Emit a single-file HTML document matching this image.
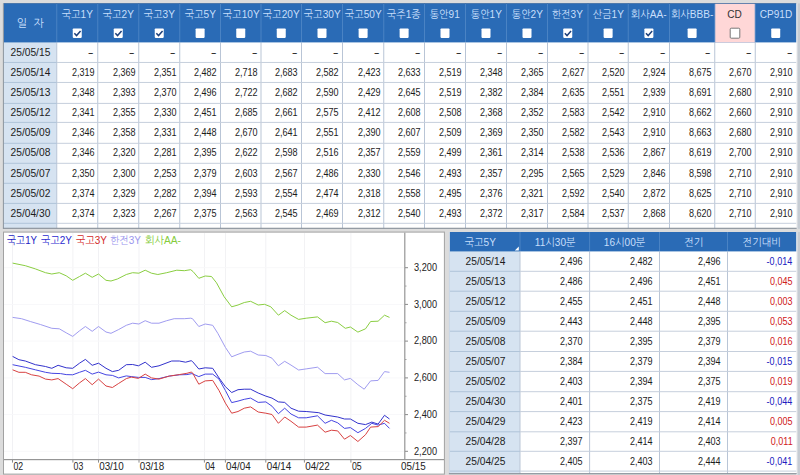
<!DOCTYPE html>
<html lang="ko"><head><meta charset="utf-8"><title>채권 수익률</title>
<style>
html,body{margin:0;padding:0}
body{width:800px;height:475px;overflow:hidden;background:#dcdcdc;position:relative;font-family:"Liberation Sans","NanumGothic",sans-serif;font-size:11px;color:#1c1c1c}
.a{position:absolute;box-sizing:border-box}
.hd{color:#c8dffb;text-align:center;white-space:nowrap}
.hd .t{position:absolute;left:-20px;right:-20px;top:4.3px;text-align:center;font-size:10.5px;line-height:12px}
.hd .t b{font-weight:normal;display:inline-block;transform:scaleX(.96)}
.c{text-align:right;white-space:nowrap;line-height:20px;height:20px}
.c b{font-weight:normal;display:inline-block;transform:scaleX(.82);transform-origin:100% 50%;font-size:11px}
.d{text-align:center;white-space:nowrap;line-height:20px;height:20px}
.d b{font-weight:normal;display:inline-block;transform:scaleX(.93);font-size:11px}
.dash b{transform:scaleX(1.6)}
.red b{color:#d02020}.blu b{color:#2020c0}
</style></head><body>
<svg class="a" style="left:0;top:0" width="800" height="475" viewBox="0 0 800 475" font-family="'Liberation Sans','NanumGothic',sans-serif">
<rect x="796.20" y="3.40" width="1.30" height="225.40" fill="#f4f6f8"/>
<rect x="797.50" y="3.40" width="2.50" height="225.40" fill="#c6ccd3"/>
<rect x="3.70" y="3.40" width="792.50" height="224.90" fill="#ffffff"/>
<rect x="3.70" y="3.40" width="53.05" height="224.90" fill="#d6e3f1"/>
<rect x="3.70" y="3.40" width="792.50" height="39.00" fill="#2a6bb6"/>
<rect x="714.75" y="3.40" width="40.50" height="39.00" fill="#ffd7d7"/>
<rect x="56.25" y="3.40" width="1.00" height="39.00" fill="#4a83c4"/>
<rect x="97.25" y="3.40" width="1.00" height="39.00" fill="#4a83c4"/>
<rect x="138.25" y="3.40" width="1.00" height="39.00" fill="#4a83c4"/>
<rect x="179.25" y="3.40" width="1.00" height="39.00" fill="#4a83c4"/>
<rect x="220.00" y="3.40" width="1.00" height="39.00" fill="#4a83c4"/>
<rect x="260.50" y="3.40" width="1.00" height="39.00" fill="#4a83c4"/>
<rect x="301.00" y="3.40" width="1.00" height="39.00" fill="#4a83c4"/>
<rect x="342.00" y="3.40" width="1.00" height="39.00" fill="#4a83c4"/>
<rect x="383.25" y="3.40" width="1.00" height="39.00" fill="#4a83c4"/>
<rect x="424.00" y="3.40" width="1.00" height="39.00" fill="#4a83c4"/>
<rect x="465.00" y="3.40" width="1.00" height="39.00" fill="#4a83c4"/>
<rect x="506.00" y="3.40" width="1.00" height="39.00" fill="#4a83c4"/>
<rect x="547.00" y="3.40" width="1.00" height="39.00" fill="#4a83c4"/>
<rect x="587.50" y="3.40" width="1.00" height="39.00" fill="#4a83c4"/>
<rect x="627.75" y="3.40" width="1.00" height="39.00" fill="#4a83c4"/>
<rect x="669.00" y="3.40" width="1.00" height="39.00" fill="#4a83c4"/>
<rect x="714.25" y="3.40" width="1.00" height="39.00" fill="#4a83c4"/>
<rect x="754.75" y="3.40" width="1.00" height="39.00" fill="#4a83c4"/>
<rect x="56.25" y="42.40" width="1.00" height="185.90" fill="#b9c5d6"/>
<rect x="97.25" y="42.40" width="1.00" height="185.90" fill="#b9c5d6"/>
<rect x="138.25" y="42.40" width="1.00" height="185.90" fill="#b9c5d6"/>
<rect x="179.25" y="42.40" width="1.00" height="185.90" fill="#b9c5d6"/>
<rect x="220.00" y="42.40" width="1.00" height="185.90" fill="#b9c5d6"/>
<rect x="260.50" y="42.40" width="1.00" height="185.90" fill="#b9c5d6"/>
<rect x="301.00" y="42.40" width="1.00" height="185.90" fill="#b9c5d6"/>
<rect x="342.00" y="42.40" width="1.00" height="185.90" fill="#b9c5d6"/>
<rect x="383.25" y="42.40" width="1.00" height="185.90" fill="#b9c5d6"/>
<rect x="424.00" y="42.40" width="1.00" height="185.90" fill="#b9c5d6"/>
<rect x="465.00" y="42.40" width="1.00" height="185.90" fill="#b9c5d6"/>
<rect x="506.00" y="42.40" width="1.00" height="185.90" fill="#b9c5d6"/>
<rect x="547.00" y="42.40" width="1.00" height="185.90" fill="#b9c5d6"/>
<rect x="587.50" y="42.40" width="1.00" height="185.90" fill="#b9c5d6"/>
<rect x="627.75" y="42.40" width="1.00" height="185.90" fill="#b9c5d6"/>
<rect x="669.00" y="42.40" width="1.00" height="185.90" fill="#b9c5d6"/>
<rect x="714.25" y="42.40" width="1.00" height="185.90" fill="#b9c5d6"/>
<rect x="754.75" y="42.40" width="1.00" height="185.90" fill="#b9c5d6"/>
<rect x="56.75" y="61.95" width="739.45" height="1.00" fill="#c6cfdc"/>
<rect x="3.70" y="61.95" width="53.05" height="1.00" fill="#b0c4d9"/>
<rect x="56.75" y="81.95" width="739.45" height="1.00" fill="#c6cfdc"/>
<rect x="3.70" y="81.95" width="53.05" height="1.00" fill="#b0c4d9"/>
<rect x="56.75" y="102.90" width="739.45" height="1.00" fill="#c6cfdc"/>
<rect x="3.70" y="102.90" width="53.05" height="1.00" fill="#b0c4d9"/>
<rect x="56.75" y="121.90" width="739.45" height="1.00" fill="#c6cfdc"/>
<rect x="3.70" y="121.90" width="53.05" height="1.00" fill="#b0c4d9"/>
<rect x="56.75" y="142.80" width="739.45" height="1.00" fill="#c6cfdc"/>
<rect x="3.70" y="142.80" width="53.05" height="1.00" fill="#b0c4d9"/>
<rect x="56.75" y="162.80" width="739.45" height="1.00" fill="#c6cfdc"/>
<rect x="3.70" y="162.80" width="53.05" height="1.00" fill="#b0c4d9"/>
<rect x="56.75" y="182.80" width="739.45" height="1.00" fill="#c6cfdc"/>
<rect x="3.70" y="182.80" width="53.05" height="1.00" fill="#b0c4d9"/>
<rect x="56.75" y="202.90" width="739.45" height="1.00" fill="#c6cfdc"/>
<rect x="3.70" y="202.90" width="53.05" height="1.00" fill="#b0c4d9"/>
<rect x="56.75" y="222.80" width="739.45" height="1.00" fill="#c6cfdc"/>
<rect x="3.70" y="222.80" width="53.05" height="1.00" fill="#b0c4d9"/>
<rect x="2.90" y="3.40" width="1.00" height="224.90" fill="#8b949e"/>
<rect x="3.70" y="3.25" width="792.50" height="0.70" fill="#3c679c"/>
<rect x="2.90" y="227.75" width="793.80" height="1.10" fill="#868e97"/>
<rect x="72.75" y="28.50" width="9.00" height="9.40" rx="0.8" fill="#fff"/>
<path d="M74.35 33.20 l2.2 2.4 l4 -4.6" fill="none" stroke="#1c3f7a" stroke-width="1.45"/>
<rect x="113.75" y="28.50" width="9.00" height="9.40" rx="0.8" fill="#fff"/>
<path d="M115.35 33.20 l2.2 2.4 l4 -4.6" fill="none" stroke="#1c3f7a" stroke-width="1.45"/>
<rect x="154.75" y="28.50" width="9.00" height="9.40" rx="0.8" fill="#fff"/>
<path d="M156.35 33.20 l2.2 2.4 l4 -4.6" fill="none" stroke="#1c3f7a" stroke-width="1.45"/>
<rect x="195.62" y="28.50" width="9.00" height="9.40" rx="0.8" fill="#fff"/>
<rect x="236.25" y="28.50" width="9.00" height="9.40" rx="0.8" fill="#fff"/>
<rect x="276.75" y="28.50" width="9.00" height="9.40" rx="0.8" fill="#fff"/>
<rect x="317.50" y="28.50" width="9.00" height="9.40" rx="0.8" fill="#fff"/>
<rect x="358.62" y="28.50" width="9.00" height="9.40" rx="0.8" fill="#fff"/>
<rect x="399.62" y="28.50" width="9.00" height="9.40" rx="0.8" fill="#fff"/>
<rect x="440.50" y="28.50" width="9.00" height="9.40" rx="0.8" fill="#fff"/>
<rect x="481.50" y="28.50" width="9.00" height="9.40" rx="0.8" fill="#fff"/>
<rect x="522.50" y="28.50" width="9.00" height="9.40" rx="0.8" fill="#fff"/>
<rect x="563.25" y="28.50" width="9.00" height="9.40" rx="0.8" fill="#fff"/>
<path d="M564.85 33.20 l2.2 2.4 l4 -4.6" fill="none" stroke="#1c3f7a" stroke-width="1.45"/>
<rect x="603.62" y="28.50" width="9.00" height="9.40" rx="0.8" fill="#fff"/>
<rect x="644.38" y="28.50" width="9.00" height="9.40" rx="0.8" fill="#fff"/>
<path d="M645.98 33.20 l2.2 2.4 l4 -4.6" fill="none" stroke="#1c3f7a" stroke-width="1.45"/>
<rect x="687.62" y="28.50" width="9.00" height="9.40" rx="0.8" fill="#fff"/>
<rect x="730.20" y="28.20" width="9.60" height="10.00" rx="1" fill="#fff" stroke="#777" stroke-width="1"/>
<rect x="771.23" y="28.50" width="9.00" height="9.40" rx="0.8" fill="#fff"/>
<rect x="3.50" y="232.10" width="440.90" height="242.00" fill="#ffffff" stroke="#a2a2a2" stroke-width="1"/>
<rect x="12.05" y="233.00" width="0.90" height="226.00" fill="#f0f0f3"/>
<rect x="72.45" y="233.00" width="0.90" height="226.00" fill="#f0f0f3"/>
<rect x="98.05" y="233.00" width="0.90" height="226.00" fill="#f0f0f3"/>
<rect x="138.55" y="233.00" width="0.90" height="226.00" fill="#f0f0f3"/>
<rect x="203.95" y="233.00" width="0.90" height="226.00" fill="#f0f0f3"/>
<rect x="224.95" y="233.00" width="0.90" height="226.00" fill="#f0f0f3"/>
<rect x="265.35" y="233.00" width="0.90" height="226.00" fill="#f0f0f3"/>
<rect x="303.95" y="233.00" width="0.90" height="226.00" fill="#f0f0f3"/>
<rect x="350.45" y="233.00" width="0.90" height="226.00" fill="#f0f0f3"/>
<rect x="4.00" y="267.25" width="400.00" height="0.90" fill="#f7f7f9"/>
<rect x="4.00" y="303.95" width="400.00" height="0.90" fill="#f7f7f9"/>
<rect x="4.00" y="340.65" width="400.00" height="0.90" fill="#f7f7f9"/>
<rect x="4.00" y="377.45" width="400.00" height="0.90" fill="#f7f7f9"/>
<rect x="4.00" y="414.15" width="400.00" height="0.90" fill="#f7f7f9"/>
<rect x="4.00" y="450.85" width="400.00" height="0.90" fill="#f7f7f9"/>
<rect x="404.20" y="232.60" width="1.20" height="227.00" fill="#969696"/>
<rect x="4.00" y="459.00" width="440.00" height="1.20" fill="#969696"/>
<rect x="405.00" y="267.20" width="3.00" height="1.00" fill="#8c8c8c"/>
<rect x="405.00" y="303.90" width="3.00" height="1.00" fill="#8c8c8c"/>
<rect x="405.00" y="340.60" width="3.00" height="1.00" fill="#8c8c8c"/>
<rect x="405.00" y="377.40" width="3.00" height="1.00" fill="#8c8c8c"/>
<rect x="405.00" y="414.10" width="3.00" height="1.00" fill="#8c8c8c"/>
<rect x="405.00" y="450.80" width="3.00" height="1.00" fill="#8c8c8c"/>
<rect x="405.00" y="285.55" width="1.50" height="1.00" fill="#a0a0a0"/>
<rect x="405.00" y="322.25" width="1.50" height="1.00" fill="#a0a0a0"/>
<rect x="405.00" y="359.00" width="1.50" height="1.00" fill="#a0a0a0"/>
<rect x="405.00" y="395.75" width="1.50" height="1.00" fill="#a0a0a0"/>
<rect x="405.00" y="432.45" width="1.50" height="1.00" fill="#a0a0a0"/>
<rect x="12.00" y="460.00" width="1.00" height="2.60" fill="#8c8c8c"/>
<rect x="72.40" y="460.00" width="1.00" height="2.60" fill="#8c8c8c"/>
<rect x="98.00" y="460.00" width="1.00" height="2.60" fill="#8c8c8c"/>
<rect x="138.50" y="460.00" width="1.00" height="2.60" fill="#8c8c8c"/>
<rect x="203.90" y="460.00" width="1.00" height="2.60" fill="#8c8c8c"/>
<rect x="224.90" y="460.00" width="1.00" height="2.60" fill="#8c8c8c"/>
<rect x="265.30" y="460.00" width="1.00" height="2.60" fill="#8c8c8c"/>
<rect x="303.90" y="460.00" width="1.00" height="2.60" fill="#8c8c8c"/>
<rect x="350.40" y="460.00" width="1.00" height="2.60" fill="#8c8c8c"/>
<polyline points="12.6,263.1 25.3,265.7 35.4,268.9 45.5,272.7 51.8,274.0 59.3,272.7 66.2,275.8 72.7,280.3 79.5,276.5 85.4,273.2 92.2,277.3 98.5,274.0 106.0,280.3 111.0,281.0 117.4,279.0 126.3,274.5 132.6,272.7 138.9,273.2 145.2,270.2 151.5,273.2 157.8,274.5 166.7,272.7 176.8,270.2 184.3,270.7 190.7,269.7 193.0,271.5 198.8,278.3 205.2,276.0 211.5,276.5 216.5,282.8 224.1,296.7 231.7,306.8 238.0,305.0 244.3,302.5 250.6,301.3 258.2,305.0 264.5,304.3 270.8,306.8 278.4,315.2 284.7,310.6 291.0,315.2 298.6,319.4 306.2,318.2 317.5,316.9 325.1,322.7 331.4,321.2 337.7,322.5 345.3,328.3 350.4,327.0 357.9,332.1 365.5,328.8 370.6,321.5 378.1,321.2 384.5,315.2 389.5,317.4" fill="none" stroke="#8ace42" stroke-width="1"/>
<polyline points="12.6,317.4 21.5,318.7 30.3,321.5 40.4,324.5 51.8,328.3 59.3,328.8 66.2,332.8 72.7,336.4 79.5,330.8 85.4,326.5 92.2,331.3 98.5,326.5 106.0,332.0 111.0,333.3 118.7,329.5 126.3,325.3 132.6,323.2 138.9,324.0 145.2,320.7 151.5,323.2 159.0,323.2 166.7,320.7 174.2,318.7 184.3,318.7 190.7,318.2 192.5,318.7 198.8,326.5 205.2,324.0 212.7,325.3 217.8,333.3 225.4,347.4 231.7,356.8 238.0,354.3 244.3,352.0 250.6,351.2 258.2,355.0 265.8,355.5 272.0,358.2 278.4,365.8 284.7,361.3 291.0,365.1 298.6,370.0 306.2,368.9 317.5,367.2 325.1,373.6 337.7,373.6 344.5,379.9 350.4,378.4 357.9,384.7 364.2,389.2 370.6,380.9 378.1,380.4 384.5,371.6 389.5,372.3" fill="none" stroke="#a09cf0" stroke-width="1"/>
<polyline points="12.6,356.4 18.9,359.7 25.3,361.0 35.4,364.7 45.5,366.5 51.8,368.3 58.1,365.3 66.2,367.8 72.7,368.3 79.5,363.2 85.4,359.4 92.2,365.3 98.5,363.2 106.0,368.3 112.4,371.6 118.7,370.3 126.3,364.7 132.6,364.5 138.4,365.8 145.2,362.2 151.5,367.3 159.0,365.8 171.7,361.0 179.3,361.0 185.6,362.2 191.2,360.7 192.5,361.5 198.8,369.0 205.2,367.8 212.7,368.3 219.0,377.9 225.4,386.7 231.7,392.5 238.0,389.7 244.3,389.2 250.6,389.2 258.2,393.0 265.8,396.1 272.0,398.1 278.4,401.9 284.7,402.4 291.0,408.2 298.6,411.2 306.2,411.5 318.8,412.7 325.1,415.0 337.7,417.0 344.5,419.0 350.4,419.0 357.9,423.3 365.5,424.6 371.8,422.1 378.1,424.1 384.5,415.3 389.5,419.0" fill="none" stroke="#3232cc" stroke-width="1"/>
<polyline points="12.6,364.7 25.3,367.3 35.4,369.8 45.5,372.3 51.8,373.3 60.6,373.6 66.2,374.6 72.7,374.8 79.5,372.3 85.4,370.3 92.2,374.1 98.5,372.1 106.0,374.8 112.4,375.4 118.7,377.9 126.3,375.9 131.3,376.6 138.4,377.4 145.2,377.4 151.5,379.6 159.0,378.6 169.2,376.1 179.3,374.8 186.9,374.6 191.9,373.6 198.8,376.6 205.2,374.1 212.7,374.1 219.0,379.1 225.4,390.5 231.7,402.6 238.0,401.1 244.3,399.3 250.6,398.1 258.2,402.4 265.8,401.9 272.0,406.2 278.4,413.7 284.7,408.2 291.0,414.0 298.6,417.8 306.2,417.8 317.5,415.8 325.1,423.3 331.4,420.3 337.7,422.8 344.5,428.4 350.4,427.6 357.9,432.7 365.5,428.4 371.8,423.3 378.1,425.1 384.5,423.3 389.5,428.4" fill="none" stroke="#4545e2" stroke-width="1"/>
<polyline points="12.6,369.8 18.9,372.3 25.3,372.3 31.6,374.8 39.1,376.1 45.5,379.1 51.8,379.9 58.1,378.6 66.2,384.2 72.7,388.7 79.5,382.9 85.4,378.6 92.2,384.7 98.5,379.1 106.0,386.0 112.4,387.5 118.7,383.4 126.3,378.6 131.3,377.1 138.4,378.4 145.2,374.1 151.5,377.9 159.0,379.1 169.2,376.1 179.3,374.6 186.9,373.3 191.2,372.1 192.5,372.8 198.8,384.2 205.2,380.9 212.7,380.4 219.0,390.5 225.4,403.1 231.7,413.2 238.0,411.5 244.3,408.2 250.6,406.9 258.2,412.0 265.8,413.2 272.0,414.5 278.4,423.3 284.7,417.0 291.0,421.3 298.6,427.1 306.2,427.1 317.5,425.1 325.1,432.2 331.4,430.2 337.7,430.9 344.5,439.2 350.4,435.5 357.9,441.5 365.5,434.7 370.6,427.1 378.1,426.6 384.5,420.3 389.5,423.3" fill="none" stroke="#d84242" stroke-width="1"/>
<text x="414" y="271.0" font-size="11" fill="#222" textLength="23" lengthAdjust="spacingAndGlyphs">3,200</text>
<text x="414" y="307.7" font-size="11" fill="#222" textLength="23" lengthAdjust="spacingAndGlyphs">3,000</text>
<text x="414" y="344.4" font-size="11" fill="#222" textLength="23" lengthAdjust="spacingAndGlyphs">2,800</text>
<text x="414" y="381.2" font-size="11" fill="#222" textLength="23" lengthAdjust="spacingAndGlyphs">2,600</text>
<text x="414" y="417.9" font-size="11" fill="#222" textLength="23" lengthAdjust="spacingAndGlyphs">2,400</text>
<text x="414" y="454.6" font-size="11" fill="#222" textLength="23" lengthAdjust="spacingAndGlyphs">2,200</text>
<text x="13.4" y="470.4" font-size="11" fill="#222" textLength="9.7" lengthAdjust="spacingAndGlyphs">02</text>
<text x="73.6" y="470.4" font-size="11" fill="#222" textLength="9.7" lengthAdjust="spacingAndGlyphs">03</text>
<text x="99.2" y="470.4" font-size="11" fill="#222" textLength="24.6" lengthAdjust="spacingAndGlyphs">03/10</text>
<text x="139.7" y="470.4" font-size="11" fill="#222" textLength="24.6" lengthAdjust="spacingAndGlyphs">03/18</text>
<text x="205.2" y="470.4" font-size="11" fill="#222" textLength="9.7" lengthAdjust="spacingAndGlyphs">04</text>
<text x="226.1" y="470.4" font-size="11" fill="#222" textLength="24.6" lengthAdjust="spacingAndGlyphs">04/04</text>
<text x="266.7" y="470.4" font-size="11" fill="#222" textLength="24.6" lengthAdjust="spacingAndGlyphs">04/14</text>
<text x="305.2" y="470.4" font-size="11" fill="#222" textLength="24.6" lengthAdjust="spacingAndGlyphs">04/22</text>
<text x="352.0" y="470.4" font-size="11" fill="#222" textLength="9.7" lengthAdjust="spacingAndGlyphs">05</text>
<text x="401.0" y="470.4" font-size="11" fill="#222" textLength="24.6" lengthAdjust="spacingAndGlyphs">05/15</text>
<text x="7.0" y="244" font-size="10.5" fill="#2222c4" textLength="30" lengthAdjust="spacingAndGlyphs">국고1Y</text>
<text x="41.0" y="244" font-size="10.5" fill="#2a2ad0" textLength="31" lengthAdjust="spacingAndGlyphs">국고2Y</text>
<text x="76.0" y="244" font-size="10.5" fill="#d42a2a" textLength="31" lengthAdjust="spacingAndGlyphs">국고3Y</text>
<text x="110.0" y="244" font-size="10.5" fill="#9a96ee" textLength="31" lengthAdjust="spacingAndGlyphs">한전3Y</text>
<text x="145.0" y="244" font-size="10.5" fill="#86cc3c" textLength="36" lengthAdjust="spacingAndGlyphs">회사AA-</text>
<rect x="796.20" y="232.00" width="1.30" height="243.00" fill="#f4f6f8"/>
<rect x="797.50" y="232.00" width="2.50" height="243.00" fill="#c6ccd3"/>
<rect x="449.60" y="232.00" width="346.60" height="241.70" fill="#ffffff"/>
<rect x="449.60" y="232.00" width="70.40" height="241.70" fill="#d6e3f1"/>
<rect x="449.60" y="232.00" width="346.60" height="19.40" fill="#2a6bb6"/>
<rect x="519.50" y="232.00" width="1.00" height="19.40" fill="#4a83c4"/>
<rect x="519.50" y="251.40" width="1.00" height="222.30" fill="#b9c5d6"/>
<rect x="589.10" y="232.00" width="1.00" height="19.40" fill="#4a83c4"/>
<rect x="589.10" y="251.40" width="1.00" height="222.30" fill="#b9c5d6"/>
<rect x="659.00" y="232.00" width="1.00" height="19.40" fill="#4a83c4"/>
<rect x="659.00" y="251.40" width="1.00" height="222.30" fill="#b9c5d6"/>
<rect x="727.00" y="232.00" width="1.00" height="19.40" fill="#4a83c4"/>
<rect x="727.00" y="251.40" width="1.00" height="222.30" fill="#b9c5d6"/>
<rect x="520.00" y="270.80" width="276.20" height="1.00" fill="#c6cfdc"/>
<rect x="449.60" y="270.80" width="70.40" height="1.00" fill="#b0c4d9"/>
<rect x="520.00" y="290.70" width="276.20" height="1.00" fill="#c6cfdc"/>
<rect x="449.60" y="290.70" width="70.40" height="1.00" fill="#b0c4d9"/>
<rect x="520.00" y="310.80" width="276.20" height="1.00" fill="#c6cfdc"/>
<rect x="449.60" y="310.80" width="70.40" height="1.00" fill="#b0c4d9"/>
<rect x="520.00" y="330.70" width="276.20" height="1.00" fill="#c6cfdc"/>
<rect x="449.60" y="330.70" width="70.40" height="1.00" fill="#b0c4d9"/>
<rect x="520.00" y="351.00" width="276.20" height="1.00" fill="#c6cfdc"/>
<rect x="449.60" y="351.00" width="70.40" height="1.00" fill="#b0c4d9"/>
<rect x="520.00" y="370.90" width="276.20" height="1.00" fill="#c6cfdc"/>
<rect x="449.60" y="370.90" width="70.40" height="1.00" fill="#b0c4d9"/>
<rect x="520.00" y="391.20" width="276.20" height="1.00" fill="#c6cfdc"/>
<rect x="449.60" y="391.20" width="70.40" height="1.00" fill="#b0c4d9"/>
<rect x="520.00" y="411.10" width="276.20" height="1.00" fill="#c6cfdc"/>
<rect x="449.60" y="411.10" width="70.40" height="1.00" fill="#b0c4d9"/>
<rect x="520.00" y="431.30" width="276.20" height="1.00" fill="#c6cfdc"/>
<rect x="449.60" y="431.30" width="70.40" height="1.00" fill="#b0c4d9"/>
<rect x="520.00" y="450.80" width="276.20" height="1.00" fill="#c6cfdc"/>
<rect x="449.60" y="450.80" width="70.40" height="1.00" fill="#b0c4d9"/>
<rect x="520.00" y="470.60" width="276.20" height="1.00" fill="#c6cfdc"/>
<rect x="449.60" y="470.60" width="70.40" height="1.00" fill="#b0c4d9"/>
<rect x="448.90" y="232.00" width="1.00" height="241.70" fill="#c9d6e6"/>
<rect x="448.90" y="473.15" width="347.80" height="1.10" fill="#868e97"/>
<path d="M518.80 250.40 v-4 l-4 4 z" fill="#fff"/>
</svg>
<div class="a hd" style="left:3.70px;top:3.4px;width:53.05px;height:38px"><span class="t" style="top:14px;font-size:11px">일&nbsp;&nbsp;자</span></div>
<div class="a hd" style="left:56.75px;top:3.4px;width:41.00px;height:38px"><span class="t"><b>국고1Y</b></span></div>
<div class="a hd" style="left:97.75px;top:3.4px;width:41.00px;height:38px"><span class="t"><b>국고2Y</b></span></div>
<div class="a hd" style="left:138.75px;top:3.4px;width:41.00px;height:38px"><span class="t"><b>국고3Y</b></span></div>
<div class="a hd" style="left:179.75px;top:3.4px;width:40.75px;height:38px"><span class="t"><b>국고5Y</b></span></div>
<div class="a hd" style="left:220.50px;top:3.4px;width:40.50px;height:38px"><span class="t"><b>국고10Y</b></span></div>
<div class="a hd" style="left:261.00px;top:3.4px;width:40.50px;height:38px"><span class="t"><b>국고20Y</b></span></div>
<div class="a hd" style="left:301.50px;top:3.4px;width:41.00px;height:38px"><span class="t"><b>국고30Y</b></span></div>
<div class="a hd" style="left:342.50px;top:3.4px;width:41.25px;height:38px"><span class="t"><b>국고50Y</b></span></div>
<div class="a hd" style="left:383.75px;top:3.4px;width:40.75px;height:38px"><span class="t"><b>국주1종</b></span></div>
<div class="a hd" style="left:424.50px;top:3.4px;width:41.00px;height:38px"><span class="t"><b>통안91</b></span></div>
<div class="a hd" style="left:465.50px;top:3.4px;width:41.00px;height:38px"><span class="t"><b>통안1Y</b></span></div>
<div class="a hd" style="left:506.50px;top:3.4px;width:41.00px;height:38px"><span class="t"><b>통안2Y</b></span></div>
<div class="a hd" style="left:547.50px;top:3.4px;width:40.50px;height:38px"><span class="t"><b>한전3Y</b></span></div>
<div class="a hd" style="left:588.00px;top:3.4px;width:40.25px;height:38px"><span class="t"><b>산금1Y</b></span></div>
<div class="a hd" style="left:628.25px;top:3.4px;width:41.25px;height:38px"><span class="t"><b>회사AA-</b></span></div>
<div class="a hd" style="left:669.50px;top:3.4px;width:45.25px;height:38px"><span class="t"><b>회사BBB-</b></span></div>
<div class="a hd" style="left:714.75px;top:3.4px;width:40.50px;height:38px;color:#333"><span class="t"><b>CD</b></span></div>
<div class="a hd" style="left:755.25px;top:3.4px;width:40.95px;height:38px"><span class="t"><b>CP91D</b></span></div>
<div class="a d" style="left:3.70px;top:42px;width:53.05px;padding-left:1.00px"><b>25/05/15</b></div>
<div class="a c dash" style="left:56.75px;top:42px;width:41.00px;padding-right:3.60px"><b>-</b></div>
<div class="a c dash" style="left:97.75px;top:42px;width:41.00px;padding-right:3.60px"><b>-</b></div>
<div class="a c dash" style="left:138.75px;top:42px;width:41.00px;padding-right:3.60px"><b>-</b></div>
<div class="a c dash" style="left:179.75px;top:42px;width:40.75px;padding-right:3.60px"><b>-</b></div>
<div class="a c dash" style="left:220.50px;top:42px;width:40.50px;padding-right:3.60px"><b>-</b></div>
<div class="a c dash" style="left:261.00px;top:42px;width:40.50px;padding-right:3.60px"><b>-</b></div>
<div class="a c dash" style="left:301.50px;top:42px;width:41.00px;padding-right:3.60px"><b>-</b></div>
<div class="a c dash" style="left:342.50px;top:42px;width:41.25px;padding-right:3.60px"><b>-</b></div>
<div class="a c dash" style="left:383.75px;top:42px;width:40.75px;padding-right:3.60px"><b>-</b></div>
<div class="a c dash" style="left:424.50px;top:42px;width:41.00px;padding-right:3.60px"><b>-</b></div>
<div class="a c dash" style="left:465.50px;top:42px;width:41.00px;padding-right:3.60px"><b>-</b></div>
<div class="a c dash" style="left:506.50px;top:42px;width:41.00px;padding-right:3.60px"><b>-</b></div>
<div class="a c dash" style="left:547.50px;top:42px;width:40.50px;padding-right:3.60px"><b>-</b></div>
<div class="a c dash" style="left:588.00px;top:42px;width:40.25px;padding-right:3.60px"><b>-</b></div>
<div class="a c dash" style="left:628.25px;top:42px;width:41.25px;padding-right:3.60px"><b>-</b></div>
<div class="a c dash" style="left:669.50px;top:42px;width:45.25px;padding-right:3.60px"><b>-</b></div>
<div class="a c dash" style="left:714.75px;top:42px;width:40.50px;padding-right:3.60px"><b>-</b></div>
<div class="a c dash" style="left:755.25px;top:42px;width:40.95px;padding-right:3.60px"><b>-</b></div>
<div class="a d" style="left:3.70px;top:62px;width:53.05px;padding-left:1.00px"><b>25/05/14</b></div>
<div class="a c" style="left:56.75px;top:62px;width:41.00px;padding-right:3.50px"><b>2,319</b></div>
<div class="a c" style="left:97.75px;top:62px;width:41.00px;padding-right:3.50px"><b>2,369</b></div>
<div class="a c" style="left:138.75px;top:62px;width:41.00px;padding-right:3.50px"><b>2,351</b></div>
<div class="a c" style="left:179.75px;top:62px;width:40.75px;padding-right:3.50px"><b>2,482</b></div>
<div class="a c" style="left:220.50px;top:62px;width:40.50px;padding-right:3.50px"><b>2,718</b></div>
<div class="a c" style="left:261.00px;top:62px;width:40.50px;padding-right:3.50px"><b>2,683</b></div>
<div class="a c" style="left:301.50px;top:62px;width:41.00px;padding-right:3.50px"><b>2,582</b></div>
<div class="a c" style="left:342.50px;top:62px;width:41.25px;padding-right:3.50px"><b>2,423</b></div>
<div class="a c" style="left:383.75px;top:62px;width:40.75px;padding-right:3.50px"><b>2,633</b></div>
<div class="a c" style="left:424.50px;top:62px;width:41.00px;padding-right:3.50px"><b>2,519</b></div>
<div class="a c" style="left:465.50px;top:62px;width:41.00px;padding-right:3.50px"><b>2,348</b></div>
<div class="a c" style="left:506.50px;top:62px;width:41.00px;padding-right:3.50px"><b>2,365</b></div>
<div class="a c" style="left:547.50px;top:62px;width:40.50px;padding-right:3.50px"><b>2,627</b></div>
<div class="a c" style="left:588.00px;top:62px;width:40.25px;padding-right:3.50px"><b>2,520</b></div>
<div class="a c" style="left:628.25px;top:62px;width:41.25px;padding-right:3.50px"><b>2,924</b></div>
<div class="a c" style="left:669.50px;top:62px;width:45.25px;padding-right:3.50px"><b>8,675</b></div>
<div class="a c" style="left:714.75px;top:62px;width:40.50px;padding-right:3.50px"><b>2,670</b></div>
<div class="a c" style="left:755.25px;top:62px;width:40.95px;padding-right:3.50px"><b>2,910</b></div>
<div class="a d" style="left:3.70px;top:82px;width:53.05px;padding-left:1.00px"><b>25/05/13</b></div>
<div class="a c" style="left:56.75px;top:82px;width:41.00px;padding-right:3.50px"><b>2,348</b></div>
<div class="a c" style="left:97.75px;top:82px;width:41.00px;padding-right:3.50px"><b>2,393</b></div>
<div class="a c" style="left:138.75px;top:82px;width:41.00px;padding-right:3.50px"><b>2,370</b></div>
<div class="a c" style="left:179.75px;top:82px;width:40.75px;padding-right:3.50px"><b>2,496</b></div>
<div class="a c" style="left:220.50px;top:82px;width:40.50px;padding-right:3.50px"><b>2,722</b></div>
<div class="a c" style="left:261.00px;top:82px;width:40.50px;padding-right:3.50px"><b>2,682</b></div>
<div class="a c" style="left:301.50px;top:82px;width:41.00px;padding-right:3.50px"><b>2,590</b></div>
<div class="a c" style="left:342.50px;top:82px;width:41.25px;padding-right:3.50px"><b>2,429</b></div>
<div class="a c" style="left:383.75px;top:82px;width:40.75px;padding-right:3.50px"><b>2,645</b></div>
<div class="a c" style="left:424.50px;top:82px;width:41.00px;padding-right:3.50px"><b>2,519</b></div>
<div class="a c" style="left:465.50px;top:82px;width:41.00px;padding-right:3.50px"><b>2,382</b></div>
<div class="a c" style="left:506.50px;top:82px;width:41.00px;padding-right:3.50px"><b>2,384</b></div>
<div class="a c" style="left:547.50px;top:82px;width:40.50px;padding-right:3.50px"><b>2,635</b></div>
<div class="a c" style="left:588.00px;top:82px;width:40.25px;padding-right:3.50px"><b>2,551</b></div>
<div class="a c" style="left:628.25px;top:82px;width:41.25px;padding-right:3.50px"><b>2,939</b></div>
<div class="a c" style="left:669.50px;top:82px;width:45.25px;padding-right:3.50px"><b>8,691</b></div>
<div class="a c" style="left:714.75px;top:82px;width:40.50px;padding-right:3.50px"><b>2,680</b></div>
<div class="a c" style="left:755.25px;top:82px;width:40.95px;padding-right:3.50px"><b>2,910</b></div>
<div class="a d" style="left:3.70px;top:102px;width:53.05px;padding-left:1.00px"><b>25/05/12</b></div>
<div class="a c" style="left:56.75px;top:102px;width:41.00px;padding-right:3.50px"><b>2,341</b></div>
<div class="a c" style="left:97.75px;top:102px;width:41.00px;padding-right:3.50px"><b>2,355</b></div>
<div class="a c" style="left:138.75px;top:102px;width:41.00px;padding-right:3.50px"><b>2,330</b></div>
<div class="a c" style="left:179.75px;top:102px;width:40.75px;padding-right:3.50px"><b>2,451</b></div>
<div class="a c" style="left:220.50px;top:102px;width:40.50px;padding-right:3.50px"><b>2,685</b></div>
<div class="a c" style="left:261.00px;top:102px;width:40.50px;padding-right:3.50px"><b>2,661</b></div>
<div class="a c" style="left:301.50px;top:102px;width:41.00px;padding-right:3.50px"><b>2,575</b></div>
<div class="a c" style="left:342.50px;top:102px;width:41.25px;padding-right:3.50px"><b>2,412</b></div>
<div class="a c" style="left:383.75px;top:102px;width:40.75px;padding-right:3.50px"><b>2,608</b></div>
<div class="a c" style="left:424.50px;top:102px;width:41.00px;padding-right:3.50px"><b>2,508</b></div>
<div class="a c" style="left:465.50px;top:102px;width:41.00px;padding-right:3.50px"><b>2,368</b></div>
<div class="a c" style="left:506.50px;top:102px;width:41.00px;padding-right:3.50px"><b>2,352</b></div>
<div class="a c" style="left:547.50px;top:102px;width:40.50px;padding-right:3.50px"><b>2,583</b></div>
<div class="a c" style="left:588.00px;top:102px;width:40.25px;padding-right:3.50px"><b>2,542</b></div>
<div class="a c" style="left:628.25px;top:102px;width:41.25px;padding-right:3.50px"><b>2,910</b></div>
<div class="a c" style="left:669.50px;top:102px;width:45.25px;padding-right:3.50px"><b>8,662</b></div>
<div class="a c" style="left:714.75px;top:102px;width:40.50px;padding-right:3.50px"><b>2,660</b></div>
<div class="a c" style="left:755.25px;top:102px;width:40.95px;padding-right:3.50px"><b>2,910</b></div>
<div class="a d" style="left:3.70px;top:122px;width:53.05px;padding-left:1.00px"><b>25/05/09</b></div>
<div class="a c" style="left:56.75px;top:122px;width:41.00px;padding-right:3.50px"><b>2,346</b></div>
<div class="a c" style="left:97.75px;top:122px;width:41.00px;padding-right:3.50px"><b>2,358</b></div>
<div class="a c" style="left:138.75px;top:122px;width:41.00px;padding-right:3.50px"><b>2,331</b></div>
<div class="a c" style="left:179.75px;top:122px;width:40.75px;padding-right:3.50px"><b>2,448</b></div>
<div class="a c" style="left:220.50px;top:122px;width:40.50px;padding-right:3.50px"><b>2,670</b></div>
<div class="a c" style="left:261.00px;top:122px;width:40.50px;padding-right:3.50px"><b>2,641</b></div>
<div class="a c" style="left:301.50px;top:122px;width:41.00px;padding-right:3.50px"><b>2,551</b></div>
<div class="a c" style="left:342.50px;top:122px;width:41.25px;padding-right:3.50px"><b>2,390</b></div>
<div class="a c" style="left:383.75px;top:122px;width:40.75px;padding-right:3.50px"><b>2,607</b></div>
<div class="a c" style="left:424.50px;top:122px;width:41.00px;padding-right:3.50px"><b>2,509</b></div>
<div class="a c" style="left:465.50px;top:122px;width:41.00px;padding-right:3.50px"><b>2,369</b></div>
<div class="a c" style="left:506.50px;top:122px;width:41.00px;padding-right:3.50px"><b>2,350</b></div>
<div class="a c" style="left:547.50px;top:122px;width:40.50px;padding-right:3.50px"><b>2,582</b></div>
<div class="a c" style="left:588.00px;top:122px;width:40.25px;padding-right:3.50px"><b>2,543</b></div>
<div class="a c" style="left:628.25px;top:122px;width:41.25px;padding-right:3.50px"><b>2,910</b></div>
<div class="a c" style="left:669.50px;top:122px;width:45.25px;padding-right:3.50px"><b>8,663</b></div>
<div class="a c" style="left:714.75px;top:122px;width:40.50px;padding-right:3.50px"><b>2,680</b></div>
<div class="a c" style="left:755.25px;top:122px;width:40.95px;padding-right:3.50px"><b>2,910</b></div>
<div class="a d" style="left:3.70px;top:142px;width:53.05px;padding-left:1.00px"><b>25/05/08</b></div>
<div class="a c" style="left:56.75px;top:142px;width:41.00px;padding-right:3.50px"><b>2,346</b></div>
<div class="a c" style="left:97.75px;top:142px;width:41.00px;padding-right:3.50px"><b>2,320</b></div>
<div class="a c" style="left:138.75px;top:142px;width:41.00px;padding-right:3.50px"><b>2,281</b></div>
<div class="a c" style="left:179.75px;top:142px;width:40.75px;padding-right:3.50px"><b>2,395</b></div>
<div class="a c" style="left:220.50px;top:142px;width:40.50px;padding-right:3.50px"><b>2,622</b></div>
<div class="a c" style="left:261.00px;top:142px;width:40.50px;padding-right:3.50px"><b>2,598</b></div>
<div class="a c" style="left:301.50px;top:142px;width:41.00px;padding-right:3.50px"><b>2,516</b></div>
<div class="a c" style="left:342.50px;top:142px;width:41.25px;padding-right:3.50px"><b>2,357</b></div>
<div class="a c" style="left:383.75px;top:142px;width:40.75px;padding-right:3.50px"><b>2,559</b></div>
<div class="a c" style="left:424.50px;top:142px;width:41.00px;padding-right:3.50px"><b>2,499</b></div>
<div class="a c" style="left:465.50px;top:142px;width:41.00px;padding-right:3.50px"><b>2,361</b></div>
<div class="a c" style="left:506.50px;top:142px;width:41.00px;padding-right:3.50px"><b>2,314</b></div>
<div class="a c" style="left:547.50px;top:142px;width:40.50px;padding-right:3.50px"><b>2,538</b></div>
<div class="a c" style="left:588.00px;top:142px;width:40.25px;padding-right:3.50px"><b>2,536</b></div>
<div class="a c" style="left:628.25px;top:142px;width:41.25px;padding-right:3.50px"><b>2,867</b></div>
<div class="a c" style="left:669.50px;top:142px;width:45.25px;padding-right:3.50px"><b>8,619</b></div>
<div class="a c" style="left:714.75px;top:142px;width:40.50px;padding-right:3.50px"><b>2,700</b></div>
<div class="a c" style="left:755.25px;top:142px;width:40.95px;padding-right:3.50px"><b>2,910</b></div>
<div class="a d" style="left:3.70px;top:163px;width:53.05px;padding-left:1.00px"><b>25/05/07</b></div>
<div class="a c" style="left:56.75px;top:163px;width:41.00px;padding-right:3.50px"><b>2,350</b></div>
<div class="a c" style="left:97.75px;top:163px;width:41.00px;padding-right:3.50px"><b>2,300</b></div>
<div class="a c" style="left:138.75px;top:163px;width:41.00px;padding-right:3.50px"><b>2,253</b></div>
<div class="a c" style="left:179.75px;top:163px;width:40.75px;padding-right:3.50px"><b>2,379</b></div>
<div class="a c" style="left:220.50px;top:163px;width:40.50px;padding-right:3.50px"><b>2,603</b></div>
<div class="a c" style="left:261.00px;top:163px;width:40.50px;padding-right:3.50px"><b>2,567</b></div>
<div class="a c" style="left:301.50px;top:163px;width:41.00px;padding-right:3.50px"><b>2,486</b></div>
<div class="a c" style="left:342.50px;top:163px;width:41.25px;padding-right:3.50px"><b>2,330</b></div>
<div class="a c" style="left:383.75px;top:163px;width:40.75px;padding-right:3.50px"><b>2,546</b></div>
<div class="a c" style="left:424.50px;top:163px;width:41.00px;padding-right:3.50px"><b>2,493</b></div>
<div class="a c" style="left:465.50px;top:163px;width:41.00px;padding-right:3.50px"><b>2,357</b></div>
<div class="a c" style="left:506.50px;top:163px;width:41.00px;padding-right:3.50px"><b>2,295</b></div>
<div class="a c" style="left:547.50px;top:163px;width:40.50px;padding-right:3.50px"><b>2,565</b></div>
<div class="a c" style="left:588.00px;top:163px;width:40.25px;padding-right:3.50px"><b>2,529</b></div>
<div class="a c" style="left:628.25px;top:163px;width:41.25px;padding-right:3.50px"><b>2,846</b></div>
<div class="a c" style="left:669.50px;top:163px;width:45.25px;padding-right:3.50px"><b>8,598</b></div>
<div class="a c" style="left:714.75px;top:163px;width:40.50px;padding-right:3.50px"><b>2,710</b></div>
<div class="a c" style="left:755.25px;top:163px;width:40.95px;padding-right:3.50px"><b>2,910</b></div>
<div class="a d" style="left:3.70px;top:183px;width:53.05px;padding-left:1.00px"><b>25/05/02</b></div>
<div class="a c" style="left:56.75px;top:183px;width:41.00px;padding-right:3.50px"><b>2,374</b></div>
<div class="a c" style="left:97.75px;top:183px;width:41.00px;padding-right:3.50px"><b>2,329</b></div>
<div class="a c" style="left:138.75px;top:183px;width:41.00px;padding-right:3.50px"><b>2,282</b></div>
<div class="a c" style="left:179.75px;top:183px;width:40.75px;padding-right:3.50px"><b>2,394</b></div>
<div class="a c" style="left:220.50px;top:183px;width:40.50px;padding-right:3.50px"><b>2,593</b></div>
<div class="a c" style="left:261.00px;top:183px;width:40.50px;padding-right:3.50px"><b>2,554</b></div>
<div class="a c" style="left:301.50px;top:183px;width:41.00px;padding-right:3.50px"><b>2,474</b></div>
<div class="a c" style="left:342.50px;top:183px;width:41.25px;padding-right:3.50px"><b>2,318</b></div>
<div class="a c" style="left:383.75px;top:183px;width:40.75px;padding-right:3.50px"><b>2,558</b></div>
<div class="a c" style="left:424.50px;top:183px;width:41.00px;padding-right:3.50px"><b>2,495</b></div>
<div class="a c" style="left:465.50px;top:183px;width:41.00px;padding-right:3.50px"><b>2,376</b></div>
<div class="a c" style="left:506.50px;top:183px;width:41.00px;padding-right:3.50px"><b>2,321</b></div>
<div class="a c" style="left:547.50px;top:183px;width:40.50px;padding-right:3.50px"><b>2,592</b></div>
<div class="a c" style="left:588.00px;top:183px;width:40.25px;padding-right:3.50px"><b>2,540</b></div>
<div class="a c" style="left:628.25px;top:183px;width:41.25px;padding-right:3.50px"><b>2,872</b></div>
<div class="a c" style="left:669.50px;top:183px;width:45.25px;padding-right:3.50px"><b>8,625</b></div>
<div class="a c" style="left:714.75px;top:183px;width:40.50px;padding-right:3.50px"><b>2,710</b></div>
<div class="a c" style="left:755.25px;top:183px;width:40.95px;padding-right:3.50px"><b>2,910</b></div>
<div class="a d" style="left:3.70px;top:203px;width:53.05px;padding-left:1.00px"><b>25/04/30</b></div>
<div class="a c" style="left:56.75px;top:203px;width:41.00px;padding-right:3.50px"><b>2,374</b></div>
<div class="a c" style="left:97.75px;top:203px;width:41.00px;padding-right:3.50px"><b>2,323</b></div>
<div class="a c" style="left:138.75px;top:203px;width:41.00px;padding-right:3.50px"><b>2,267</b></div>
<div class="a c" style="left:179.75px;top:203px;width:40.75px;padding-right:3.50px"><b>2,375</b></div>
<div class="a c" style="left:220.50px;top:203px;width:40.50px;padding-right:3.50px"><b>2,563</b></div>
<div class="a c" style="left:261.00px;top:203px;width:40.50px;padding-right:3.50px"><b>2,545</b></div>
<div class="a c" style="left:301.50px;top:203px;width:41.00px;padding-right:3.50px"><b>2,469</b></div>
<div class="a c" style="left:342.50px;top:203px;width:41.25px;padding-right:3.50px"><b>2,312</b></div>
<div class="a c" style="left:383.75px;top:203px;width:40.75px;padding-right:3.50px"><b>2,540</b></div>
<div class="a c" style="left:424.50px;top:203px;width:41.00px;padding-right:3.50px"><b>2,493</b></div>
<div class="a c" style="left:465.50px;top:203px;width:41.00px;padding-right:3.50px"><b>2,372</b></div>
<div class="a c" style="left:506.50px;top:203px;width:41.00px;padding-right:3.50px"><b>2,317</b></div>
<div class="a c" style="left:547.50px;top:203px;width:40.50px;padding-right:3.50px"><b>2,584</b></div>
<div class="a c" style="left:588.00px;top:203px;width:40.25px;padding-right:3.50px"><b>2,537</b></div>
<div class="a c" style="left:628.25px;top:203px;width:41.25px;padding-right:3.50px"><b>2,868</b></div>
<div class="a c" style="left:669.50px;top:203px;width:45.25px;padding-right:3.50px"><b>8,620</b></div>
<div class="a c" style="left:714.75px;top:203px;width:40.50px;padding-right:3.50px"><b>2,710</b></div>
<div class="a c" style="left:755.25px;top:203px;width:40.95px;padding-right:3.50px"><b>2,910</b></div>
<div class="a hd" style="left:449.60px;top:232px;width:70.40px;height:19px"><span class="t" style="top:3.5px;margin-left:-9px"><b>국고5Y</b></span></div>
<div class="a hd" style="left:520.00px;top:232px;width:69.60px;height:19px"><span class="t" style="top:3.5px"><b>11시30분</b></span></div>
<div class="a hd" style="left:589.60px;top:232px;width:69.90px;height:19px"><span class="t" style="top:3.5px"><b>16시00분</b></span></div>
<div class="a hd" style="left:659.50px;top:232px;width:68.00px;height:19px"><span class="t" style="top:3.5px"><b>전기</b></span></div>
<div class="a hd" style="left:727.50px;top:232px;width:68.70px;height:19px"><span class="t" style="top:3.5px"><b>전기대비</b></span></div>
<div class="a d" style="left:449.60px;top:251px;width:70.40px;padding-left:1.00px"><b>25/05/14</b></div>
<div class="a c" style="left:520.00px;top:251px;width:69.60px;padding-right:6.60px"><b>2,496</b></div>
<div class="a c" style="left:589.60px;top:251px;width:69.90px;padding-right:6.60px"><b>2,482</b></div>
<div class="a c" style="left:659.50px;top:251px;width:68.00px;padding-right:6.60px"><b>2,496</b></div>
<div class="a c blu" style="left:727.50px;top:251px;width:68.70px;padding-right:3.60px"><b>-0,014</b></div>
<div class="a d" style="left:449.60px;top:271px;width:70.40px;padding-left:1.00px"><b>25/05/13</b></div>
<div class="a c" style="left:520.00px;top:271px;width:69.60px;padding-right:6.60px"><b>2,486</b></div>
<div class="a c" style="left:589.60px;top:271px;width:69.90px;padding-right:6.60px"><b>2,496</b></div>
<div class="a c" style="left:659.50px;top:271px;width:68.00px;padding-right:6.60px"><b>2,451</b></div>
<div class="a c red" style="left:727.50px;top:271px;width:68.70px;padding-right:3.60px"><b>0,045</b></div>
<div class="a d" style="left:449.60px;top:291px;width:70.40px;padding-left:1.00px"><b>25/05/12</b></div>
<div class="a c" style="left:520.00px;top:291px;width:69.60px;padding-right:6.60px"><b>2,455</b></div>
<div class="a c" style="left:589.60px;top:291px;width:69.90px;padding-right:6.60px"><b>2,451</b></div>
<div class="a c" style="left:659.50px;top:291px;width:68.00px;padding-right:6.60px"><b>2,448</b></div>
<div class="a c red" style="left:727.50px;top:291px;width:68.70px;padding-right:3.60px"><b>0,003</b></div>
<div class="a d" style="left:449.60px;top:311px;width:70.40px;padding-left:1.00px"><b>25/05/09</b></div>
<div class="a c" style="left:520.00px;top:311px;width:69.60px;padding-right:6.60px"><b>2,443</b></div>
<div class="a c" style="left:589.60px;top:311px;width:69.90px;padding-right:6.60px"><b>2,448</b></div>
<div class="a c" style="left:659.50px;top:311px;width:68.00px;padding-right:6.60px"><b>2,395</b></div>
<div class="a c red" style="left:727.50px;top:311px;width:68.70px;padding-right:3.60px"><b>0,053</b></div>
<div class="a d" style="left:449.60px;top:331px;width:70.40px;padding-left:1.00px"><b>25/05/08</b></div>
<div class="a c" style="left:520.00px;top:331px;width:69.60px;padding-right:6.60px"><b>2,370</b></div>
<div class="a c" style="left:589.60px;top:331px;width:69.90px;padding-right:6.60px"><b>2,395</b></div>
<div class="a c" style="left:659.50px;top:331px;width:68.00px;padding-right:6.60px"><b>2,379</b></div>
<div class="a c red" style="left:727.50px;top:331px;width:68.70px;padding-right:3.60px"><b>0,016</b></div>
<div class="a d" style="left:449.60px;top:351px;width:70.40px;padding-left:1.00px"><b>25/05/07</b></div>
<div class="a c" style="left:520.00px;top:351px;width:69.60px;padding-right:6.60px"><b>2,384</b></div>
<div class="a c" style="left:589.60px;top:351px;width:69.90px;padding-right:6.60px"><b>2,379</b></div>
<div class="a c" style="left:659.50px;top:351px;width:68.00px;padding-right:6.60px"><b>2,394</b></div>
<div class="a c blu" style="left:727.50px;top:351px;width:68.70px;padding-right:3.60px"><b>-0,015</b></div>
<div class="a d" style="left:449.60px;top:371px;width:70.40px;padding-left:1.00px"><b>25/05/02</b></div>
<div class="a c" style="left:520.00px;top:371px;width:69.60px;padding-right:6.60px"><b>2,403</b></div>
<div class="a c" style="left:589.60px;top:371px;width:69.90px;padding-right:6.60px"><b>2,394</b></div>
<div class="a c" style="left:659.50px;top:371px;width:68.00px;padding-right:6.60px"><b>2,375</b></div>
<div class="a c red" style="left:727.50px;top:371px;width:68.70px;padding-right:3.60px"><b>0,019</b></div>
<div class="a d" style="left:449.60px;top:391px;width:70.40px;padding-left:1.00px"><b>25/04/30</b></div>
<div class="a c" style="left:520.00px;top:391px;width:69.60px;padding-right:6.60px"><b>2,401</b></div>
<div class="a c" style="left:589.60px;top:391px;width:69.90px;padding-right:6.60px"><b>2,375</b></div>
<div class="a c" style="left:659.50px;top:391px;width:68.00px;padding-right:6.60px"><b>2,419</b></div>
<div class="a c blu" style="left:727.50px;top:391px;width:68.70px;padding-right:3.60px"><b>-0,044</b></div>
<div class="a d" style="left:449.60px;top:411px;width:70.40px;padding-left:1.00px"><b>25/04/29</b></div>
<div class="a c" style="left:520.00px;top:411px;width:69.60px;padding-right:6.60px"><b>2,423</b></div>
<div class="a c" style="left:589.60px;top:411px;width:69.90px;padding-right:6.60px"><b>2,419</b></div>
<div class="a c" style="left:659.50px;top:411px;width:68.00px;padding-right:6.60px"><b>2,414</b></div>
<div class="a c red" style="left:727.50px;top:411px;width:68.70px;padding-right:3.60px"><b>0,005</b></div>
<div class="a d" style="left:449.60px;top:431px;width:70.40px;padding-left:1.00px"><b>25/04/28</b></div>
<div class="a c" style="left:520.00px;top:431px;width:69.60px;padding-right:6.60px"><b>2,397</b></div>
<div class="a c" style="left:589.60px;top:431px;width:69.90px;padding-right:6.60px"><b>2,414</b></div>
<div class="a c" style="left:659.50px;top:431px;width:68.00px;padding-right:6.60px"><b>2,403</b></div>
<div class="a c red" style="left:727.50px;top:431px;width:68.70px;padding-right:3.60px"><b>0,011</b></div>
<div class="a d" style="left:449.60px;top:451px;width:70.40px;padding-left:1.00px"><b>25/04/25</b></div>
<div class="a c" style="left:520.00px;top:451px;width:69.60px;padding-right:6.60px"><b>2,405</b></div>
<div class="a c" style="left:589.60px;top:451px;width:69.90px;padding-right:6.60px"><b>2,403</b></div>
<div class="a c" style="left:659.50px;top:451px;width:68.00px;padding-right:6.60px"><b>2,444</b></div>
<div class="a c blu" style="left:727.50px;top:451px;width:68.70px;padding-right:3.60px"><b>-0,041</b></div>
</body></html>
